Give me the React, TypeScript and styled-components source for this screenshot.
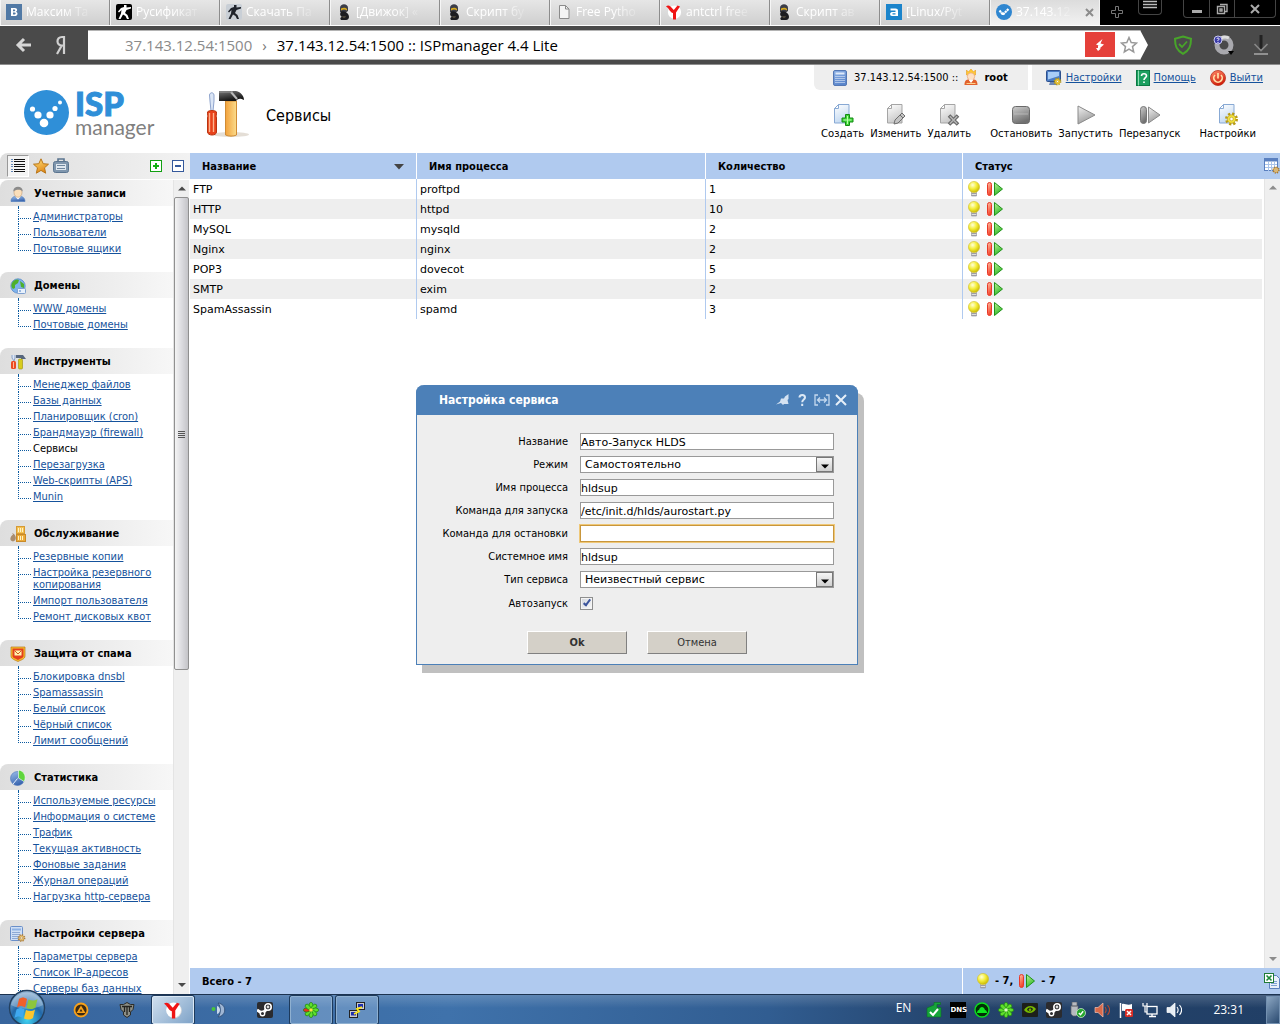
import React from 'react';
import styled, { createGlobalStyle, css } from 'styled-components';

const tahoma = `'DejaVu Sans Condensed', 'Open Sans', sans-serif`;
const verdana = `'DejaVu Sans', sans-serif`;
const segoe = `'Open Sans', 'Noto Sans', sans-serif`;

const Global = createGlobalStyle`
  *, *::before, *::after { box-sizing: border-box; }
  body { margin: 0; background: #fff; color: #000; font: 11px/14px ${tahoma}; }
  button { padding: 0; border: 0; background: none; color: inherit; font: inherit; cursor: pointer; }
  ul { list-style: none; margin: 0; padding: 0; }
  h1, h2 { margin: 0; }
  svg { display: block; flex: none; }
`;

/* ---------- drawings ---------- */

type SvgProps = { w?: number; h?: number; box?: string; children?: React.ReactNode };
const Svg = ({ w = 16, h = 16, box, children }: SvgProps) => (
  <svg width={w} height={h} viewBox={box || `0 0 ${w} ${h}`} aria-hidden="true">
    {children}
  </svg>
);

const HiddenSvg = styled.svg`
  position: absolute;
  width: 0;
  height: 0;
`;

const grads: [string, string, string, boolean?][] = [
  ['gDoc', '#ffffff', '#c3d9f1'],
  ['gDocGrey', '#ffffff', '#c9c9c9'],
  ['gGrey', '#cfcfcf', '#707070'],
  ['gGreyLight', '#f2f2f2', '#9c9c9c'],
  ['gGreen', '#c4f49a', '#2fb828'],
  ['gRed', '#ffc0a4', '#f4442c'],
  ['gBlue', '#9dc0ea', '#3a66b0'],
  ['gCalc', '#8fb2e4', '#5a86cc'],
  ['gWood', '#f2a23c', '#fbdc8c', true],
  ['gMetal', '#777777', '#111111'],
  ['gPower', '#ff8a6a', '#d2200c'],
  ['gGold', '#ffe27a', '#e28a1a'],
];

const Defs = () => (
  <HiddenSvg aria-hidden="true">
    <defs>
      {grads.map(([id, a, b, flat]) => (
        <linearGradient key={id} id={id} x1="0" y1="0" x2={flat ? '1' : '0.4'} y2={flat ? '0' : '1'}>
          <stop offset="0" stopColor={a} />
          <stop offset="1" stopColor={b} />
        </linearGradient>
      ))}
      <radialGradient id="gBulb" cx="0.38" cy="0.32" r="0.7">
        <stop offset="0" stopColor="#ffffd8" />
        <stop offset="0.5" stopColor="#f4ee3c" />
        <stop offset="1" stopColor="#c9b800" />
      </radialGradient>
      <radialGradient id="gOrb" cx="0.5" cy="0.85" r="0.9">
        <stop offset="0" stopColor="#3fd0f0" />
        <stop offset="0.5" stopColor="#2268a8" />
        <stop offset="1" stopColor="#a9c4dc" />
      </radialGradient>
    </defs>
  </HiddenSvg>
);

const VkIcon = () => (
  <Svg>
    <rect width="16" height="16" fill="#5179a5" />
    <path d="M5 4h4c2.500 0 2.800 3 1 3.700C12.400 8.500 11.800 12 9 12H5zM7 5.600v1.600h1.500c1 0 1-1.600 0-1.600zm0 3v1.900h1.800c1.200 0 1.200-1.900 0-1.900z" fill="#fff" fillRule="evenodd" />
  </Svg>
);

const SoldierIcon = ({ bg, fg }: { bg: string; fg: string }) => (
  <Svg>
    <rect width="16" height="16" rx="2" fill={bg} />
    <path d="M8 1h2.500v2.500L15 3v1.500L10.500 6 9 9l2.500 2L13 15h-2l-1.500-3L7 10.500 4.500 15h-2L5 9.500 5.500 6 3 8.500 2 7.500 5 4l3-1z" fill={fg} />
  </Svg>
);

const HelmetIcon = () => (
  <Svg>
    <path d="M4 4c0-5 8-5 8 0v3L9 9 4 8z" fill="#3b3d48" />
    <path d="M5 4.500c1.500-1 5-1 6 .5v1.500c-2-1.500-4-1.500-6 0z" fill="#d6a91e" />
    <path d="M5 7.500c4-1 8 2 8 5.500 0 1.500-1 3-3 3H5c-1.500-2 0-3 1-3-2-1-2.500-3-1-5.500z" fill="#1c1c20" />
    <path d="M6 12h4l-1 2H7z" fill="#474137" />
  </Svg>
);

const PageIcon = () => (
  <Svg>
    <path d="M3.500 1.500h6l3.500 3.500v9.500H3.500z" fill="#f4f4f4" stroke="#8b8b8b" />
    <path d="M9.500 1.500V5H13" fill="none" stroke="#8b8b8b" />
  </Svg>
);

const YIcon = ({ w = 16 }: { w?: number }) => (
  <Svg w={w} h={w} box="0 0 16 16">
    <circle cx="9" cy="8.500" r="6.800" fill="#dcdcdc" />
    <circle cx="8.500" cy="8" r="6.600" fill="#fff" />
    <path d="M0 2.500c1.500-1.500 3-1.200 4.500 0L7.800 6l3.700-4.500 2.500 1L10 8.500V15.500H7V9C4 8.500 3 4 0 2.500z" fill="#f01414" />
  </Svg>
);

const AIcon = () => (
  <Svg>
    <rect width="16" height="16" fill="#1b84cb" />
    <path d="M4.500 4.500h5c1.500 0 2.500.8 2.500 2.300V12H6C3.500 12 3.500 8 6 8h3.500V6.500h-5zM6.500 9.300v1.200h3V9.300z" fill="#fff" fillRule="evenodd" />
  </Svg>
);

const IspIcon = ({ w = 45 }: { w?: number }) => (
  <Svg w={w} h={w} box="0 0 45 45">
    <circle cx="22.500" cy="22.500" r="22.500" fill="#2f8fd8" />
    <g fill="#fff">
      <circle cx="8.500" cy="19" r="2.600" />
      <circle cx="14" cy="25" r="3.600" />
      <circle cx="20" cy="33" r="4.300" />
      <circle cx="26" cy="25" r="3.600" />
      <circle cx="31" cy="18.500" r="2.600" />
      <circle cx="36" cy="12.500" r="2" />
    </g>
  </Svg>
);

const IspTabIcon = () => (
  <Svg>
    <circle cx="8" cy="8" r="8" fill="#2f86d0" />
    <path d="M3.500 6.500l3.500 4 5.500-5.500" stroke="#fff" strokeWidth="2.200" strokeDasharray="2.200 .5" fill="none" />
  </Svg>
);

const BackIcon = () => (
  <Svg w={18} h={18}>
    <path d="M16 9H3M9 3L3 9l6 6" fill="none" stroke="#d6d6d6" strokeWidth="3" />
  </Svg>
);

const YaIcon = () => (
  <Svg w={12} h={20}>
    <path d="M9 19V2H7C1 2 1 10.500 7 10.500h2M6.500 11L2 19" fill="none" stroke="#d0d0d0" strokeWidth="2.200" />
  </Svg>
);

const BoltIcon = () => (
  <Svg w={10} h={12}>
    <path d="M7.500 0L1 5.500 5 7 3 6.500V9H1l2 3 3-2.500H4.500L9 5.500 5.500 4.500z" fill="#fff" />
  </Svg>
);

const StarOutline = () => (
  <Svg w={18} h={18}>
    <path d="M9 1.500l2.200 5 5.300.5-4 3.600 1.200 5.400L9 13.200 4.300 16l1.200-5.400-4-3.600 5.300-.5z" fill="#fff" stroke="#9a9a9a" strokeWidth="1.500" />
  </Svg>
);

const ShieldIcon = () => (
  <Svg w={20} h={20}>
    <path d="M10 1.500l8 2.300c0 7-1.500 11.500-8 15-6.500-3.500-8-8-8-15z" fill="none" stroke="#48a52a" strokeWidth="2" />
    <path d="M6 9l3 3 5-5.500" fill="none" stroke="#48a52a" strokeWidth="1.800" />
  </Svg>
);

const DiscIcon = () => (
  <Svg w={22} h={22}>
    <circle cx="12" cy="11" r="7" fill="none" stroke="#a9a9ae" strokeWidth="5" />
    <path d="M6 7a8 8 0 0 1 11-3" fill="none" stroke="#ddd" strokeWidth="3" />
    <circle cx="6" cy="6" r="4" fill="#3b3ba8" stroke="#c9c9ee" />
    <path d="M4.800 5c.4-1.500 2.600-1.200 2.300.2L6 6.300v.8M6 8v1" stroke="#fff" fill="none" />
    <path d="M16 17h6l-3 4z" fill="#000" />
  </Svg>
);

const DownloadIcon = () => (
  <Svg w={16} h={22}>
    <path d="M8 1v14" stroke="#222" strokeWidth="3" />
    <path d="M1.500 10L8 16.500 14.500 10" fill="none" stroke="#888" strokeWidth="1.600" />
    <path d="M1 20h14" stroke="#aaa" strokeWidth="1.500" />
  </Svg>
);

const BigToolsIcon = () => (
  <Svg w={46} h={48}>
    <ellipse cx="27" cy="44.500" rx="18" ry="2.500" fill="#d8d0c4" opacity=".7" />
    <path d="M5.500 5c.5-3 4-3 4.500 0v6l-1 10H7L6 11z" fill="#dbe6f6" stroke="#8ea3cc" />
    <path d="M3.500 22c1-2 8-2 9 0 0 3-.5 4 0 6v14c0 4-9 4-9 0V28c.5-2 0-3 0-6z" fill="#e8421a" stroke="#b8330f" />
    <path d="M5.500 23v19M9.500 23v19" stroke="#ffb38e" strokeWidth="1.400" />
    <path d="M21.500 11h11v34c-3 1.500-8 1.500-11 0z" fill="url(#gWood)" stroke="#d08c34" />
    <path d="M15 1h17c5 1 8 5 8 9-4-2-6-1.500-8 1H15z" fill="url(#gMetal)" />
    <path d="M27 2l6 7" stroke="#bbb" strokeWidth="2" />
    <path d="M15 2h14" stroke="#999" />
  </Svg>
);

const CalcIcon = () => (
  <Svg>
    <rect x="1.500" y=".5" width="13" height="15" rx="1.500" fill="url(#gCalc)" stroke="#5478b4" />
    <path d="M3.500 3.500h9" stroke="#dfeafa" strokeWidth="2" />
    <path d="M3.500 6.500h9M3.500 8.500h9M3.500 10.500h9M3.500 12.500h9" stroke="#f4f8ff" strokeDasharray="1 1" />
  </Svg>
);

const KingIcon = () => (
  <Svg w={14} h={17}>
    <path d="M2.500 1l2 2L7 0l2.500 3 2-2v5h-9z" fill="#ffc932" stroke="#e89a1c" strokeWidth=".6" />
    <circle cx="7" cy="7.500" r="3.700" fill="#fde0c4" stroke="#e8a06a" strokeWidth=".7" />
    <path d="M.5 16c0-4.500 2-5.500 4-5.500l2.500 3 2.500-3c2 0 4 1 4 5.500z" fill="#e2622c" />
    <path d="M4.500 10.500L7 14l2.500-3.500z" fill="#fff" />
    <path d="M2.500 14.500h9" stroke="#ffd08a" />
  </Svg>
);

const Gear = ({ x, y, r, c = '#e8cf2a', s = '#b89a14' }: { x: number; y: number; r: number; c?: string; s?: string }) => (
  <g>
    <circle cx={x} cy={y} r={r} fill="none" stroke={s} strokeWidth={r * 0.6} strokeDasharray={`${r * 0.42} ${r * 0.365}`} />
    <circle cx={x} cy={y} r={r * 0.85} fill={c} stroke={s} strokeWidth=".6" />
    <circle cx={x} cy={y} r={r * 0.35} fill="#fff" stroke={s} strokeWidth=".6" />
  </g>
);

const MonitorIcon = () => (
  <Svg>
    <rect x=".5" y=".5" width="14" height="11" rx="1" fill="#4a7cc4" stroke="#2c4f8c" />
    <path d="M2 2h11v4L2 9.500z" fill="#a8cdf6" />
    <path d="M4 12h6l1 3H3z" fill="#6d87b5" />
    <Gear x={11.500} y={11.500} r={3} c="#ffd23c" />
  </Svg>
);

const HelpIcon = () => (
  <Svg w={14} h={16}>
    <rect x=".5" y=".5" width="13" height="15" fill="#1da060" stroke="#0d7a44" />
    <path d="M2.500 .5v15" stroke="#8fe0b4" />
    <path d="M5.500 6c0-3 5-3 5 0 0 1.500-2.500 2-2.500 4M8 11.500V13" fill="none" stroke="#fff" strokeWidth="1.600" />
  </Svg>
);

const PowerIcon = () => (
  <Svg>
    <circle cx="8" cy="8" r="7.500" fill="url(#gPower)" stroke="#b8301a" strokeWidth=".8" />
    <path d="M5 5a4.200 4.200 0 1 0 6 0M8 3v5.500" fill="none" stroke="#ffe0a8" strokeWidth="1.700" />
  </Svg>
);

const Sheet = ({ grey }: { grey?: boolean }) => (
  <g>
    <path d="M6.500 .5h10.500v18.500H2.500V4.500z" fill={grey ? 'url(#gDocGrey)' : 'url(#gDoc)'} stroke={grey ? '#a5a5a5' : '#88a9d4'} />
    <path d="M6.500 .5v4H2.500z" fill="#fff" stroke={grey ? '#a5a5a5' : '#88a9d4'} />
  </g>
);

const CreateIcon = () => (
  <Svg w={22} h={22}>
    <Sheet />
    <path d="M13.500 10.500h4v3.500H21v4h-3.500v3.500h-4V18H10v-4h3.500z" fill="#3fd53a" stroke="#148a14" />
    <path d="M15.500 12v8M11.500 16h8" stroke="#b8ffa8" />
  </Svg>
);
const EditIcon = () => (
  <Svg w={22} h={22}>
    <Sheet grey />
    <path d="M17 9l3 3-7 7-4 1 1-4z" fill="#c4c4c4" stroke="#6e6e6e" />
    <path d="M15 11l3 3" stroke="#6e6e6e" />
  </Svg>
);
const DeleteIcon = () => (
  <Svg w={22} h={22}>
    <Sheet grey />
    <path d="M11 11.500l9 9M20 11.500l-9 9" stroke="#666" strokeWidth="3.600" />
    <path d="M11.800 12.300l7.400 7.400M19.200 12.300l-7.400 7.400" stroke="#b4b4b4" strokeWidth="1.600" />
  </Svg>
);
const StopIcon = () => (
  <Svg w={22} h={22}>
    <rect x="2.500" y="2.500" width="17" height="17" rx="3" fill="url(#gGrey)" stroke="#6a6a6a" />
    <path d="M4 10h14" stroke="#ccc" opacity=".6" />
  </Svg>
);
const StartIcon = () => (
  <Svg w={22} h={22}>
    <path d="M3 2l17 9L3 20z" fill="url(#gGreyLight)" stroke="#8a8a8a" strokeLinejoin="round" />
  </Svg>
);
const RestartGreyIcon = () => (
  <Svg w={22} h={22}>
    <rect x="1.500" y="2.500" width="6" height="17" rx="3" fill="url(#gGrey)" stroke="#777" />
    <path d="M9.500 3l11.500 8-11.500 8z" fill="url(#gGreyLight)" stroke="#8a8a8a" strokeLinejoin="round" />
  </Svg>
);
const SheetGearIcon = () => (
  <Svg w={22} h={22}>
    <Sheet />
    <Gear x={14.500} y={15} r={5} c="#f0e040" />
  </Svg>
);

const ListIcon = () => (
  <Svg>
    <path d="M4 1.500h11M4 3.500h11M4 6.500h11M4 8.500h11M4 11.500h11M4 13.500h11" stroke="#111" />
    <path d="M1 1.500h2M1 3.500h2M1 6.500h2M1 8.500h2M1 11.500h2M1 13.500h2" stroke="#6688b8" />
  </Svg>
);
const GoldStar = () => (
  <Svg>
    <path d="M8 .8l2.200 4.900 5.300.5-4 3.600 1.200 5.400L8 12.400l-4.700 2.800 1.200-5.400-4-3.600 5.300-.5z" fill="url(#gGold)" stroke="#b8761a" />
  </Svg>
);
const CaseIcon = () => (
  <Svg>
    <path d="M5 3V1h6v2" fill="none" stroke="#5b7590" strokeWidth="1.600" />
    <rect x=".5" y="3.500" width="15" height="11" rx="2" fill="#7f96ad" stroke="#5b7590" />
    <path d="M3 6h10v6H3z" fill="#dfe7ef" />
    <path d="M4 7.500h8M4 10.500h8" stroke="#6f879f" />
  </Svg>
);
const BoxSign = ({ plus }: { plus?: boolean }) => (
  <Svg w={12} h={12}>
    <rect x=".5" y=".5" width="11" height="11" fill="#fff" stroke={plus ? '#12a012' : '#35599c'} />
    <path d={plus ? 'M6 3v6M3 6h6' : 'M3 6h6'} stroke={plus ? '#12b012' : '#35599c'} strokeWidth="2" />
  </Svg>
);

const UserIcon = () => (
  <Svg>
    <path d="M1 15.500c0-4 3-5 4-5l3 2 3-2c1 0 4 1 4 5z" fill="url(#gBlue)" stroke="#4a78bb" strokeWidth=".6" />
    <path d="M5 10.500l3 3 3-3z" fill="#fff" />
    <ellipse cx="8" cy="6.500" rx="4" ry="4.800" fill="#fbdfba" stroke="#b78a5e" strokeWidth=".5" />
    <path d="M3.500 5.500C2 -1 14 -1 12.500 5.500 11.500 3.500 6 3 3.500 5.500z" fill="#8a8a8a" />
  </Svg>
);
const GlobeIcon = () => (
  <Svg>
    <circle cx="8" cy="8" r="7.200" fill="#7db2ec" stroke="#4b7fc4" strokeWidth=".7" />
    <path d="M2 5c2-4 6-4 7-3l-1 3-3 2v3l-2 1C1 9 1 7 2 5zM10 3l4 3v4l-3-1z" fill="#4fb02c" />
    <rect x="7.500" y="10.500" width="8" height="5" rx="1" fill="#e8f1fc" stroke="#7ea0cf" />
    <path d="M9 13h2" stroke="#4b7fc4" />
  </Svg>
);
const SmallToolsIcon = () => (
  <Svg>
    <path d="M2 1v3l2 3 1-3V1" stroke="#8aa2c8" fill="#dbe6f6" />
    <rect x="1" y="7" width="5" height="8" rx="1.500" fill="#ec4a22" />
    <path d="M3.500 8v6" stroke="#ffb89a" />
    <path d="M6 1h7l3 4h-5V4H6z" fill="#56667e" />
    <rect x="8.500" y="5" width="4" height="10" rx="1" fill="#d8cc1e" stroke="#9a8f0a" strokeWidth=".6" />
  </Svg>
);
const BoxesIcon = () => (
  <Svg>
    <rect x="6.500" y=".5" width="8" height="7" fill="#f4c154" stroke="#d69a34" />
    <rect x="6.500" y="8.500" width="9" height="7" fill="#ecab3a" stroke="#c98a28" />
    <path d="M8.500 2v4M10.500 2v4M12.500 2v4M8.500 10v4M10.500 10v4M12.500 10v4" stroke="#fff3c4" />
    <path d="M2 7l2 1c3 3 2 7-1 7.500-4-.5-3-5 0-7z" fill="#a98d70" />
  </Svg>
);
const SpamIcon = () => (
  <Svg>
    <path d="M1 1h14v9c0 3-4 4-7 5.500C5 14 1 13 1 10z" fill="#f7c02c" stroke="#b9761a" strokeWidth=".7" />
    <path d="M2.500 2.500h11V10c0 2-3 2.500-5.500 4-2.500-1.500-5.500-2-5.500-4z" fill="#e4401e" />
    <rect x="4.500" y="4.500" width="7" height="5" fill="#fff3b0" />
    <path d="M4.500 4.500L8 8l3.500-3.500" stroke="#d05a20" fill="none" />
  </Svg>
);
const PieIcon = () => (
  <Svg>
    <circle cx="7.500" cy="8.500" r="7" fill="url(#gBlue)" stroke="#4a74b8" strokeWidth=".6" />
    <path d="M8.500 0a7.500 7.500 0 0 1 5.500 11.500L8.500 8z" fill="#5fd53c" stroke="#fff" strokeWidth=".6" />
    <path d="M7.500 8.500L3 14" stroke="#e8f2ff" />
  </Svg>
);
const CalcGearIcon = () => (
  <Svg>
    <rect x=".5" y=".5" width="12" height="14" rx="1" fill="#cfdff5" stroke="#6a8fc9" />
    <path d="M2 3.500h9" stroke="#8fb2e4" strokeWidth="2" />
    <path d="M2.500 6.500h8M2.500 8.500h8M2.500 10.500h8M2.500 12.500h8" stroke="#4a72b4" strokeDasharray="1 1" />
    <Gear x={11.500} y={12} r={3} c="#f3cf7a" s="#b0803a" />
  </Svg>
);

const BulbIcon = () => (
  <Svg w={14} h={16}>
    <path d="M4.500 10h5v5h-5z" fill="#ddd" stroke="#9c9ca4" strokeWidth=".7" />
    <path d="M4.500 12.500h5M4.500 14.500h5" stroke="#9c9ca4" />
    <circle cx="7" cy="6" r="5.600" fill="url(#gBulb)" stroke="#d0c030" strokeWidth=".6" />
  </Svg>
);
const RestartIcon = () => (
  <Svg w={18} h={16}>
    <rect x="1.500" y="1.500" width="4" height="13" rx="2" fill="url(#gRed)" stroke="#e83828" />
    <path d="M8.500 1.500L16.500 8l-8 6.500z" fill="url(#gGreen)" stroke="#1f9418" strokeLinejoin="round" />
  </Svg>
);
const TableGearIcon = () => (
  <Svg>
    <rect x=".5" y=".5" width="13" height="12" fill="#fff" stroke="#5a80c0" />
    <path d="M0 2h14" stroke="#5a80c0" strokeWidth="3" />
    <path d="M1 6.500h12M1 9.500h12M4.500 4v9M7.500 4v9M10.500 4v9" stroke="#a9c4ea" />
    <Gear x={12} y={12} r={2.800} c="#f5d68a" s="#a8762a" />
  </Svg>
);
const ExcelIcon = () => (
  <Svg>
    <path d="M5.500 2.500h7l3 3v10h-10z" fill="#e8effa" stroke="#5a7fbd" />
    <path d="M7 8.500h6M7 10.500h6M7 12.500h6" stroke="#7fa0d4" />
    <rect x=".5" y=".5" width="9" height="9" fill="#fff" stroke="#1f7a36" />
    <path d="M2.500 2.500l5 5M7.500 2.500l-5 5" stroke="#1f8a3a" strokeWidth="1.600" />
  </Svg>
);
const Arrow = ({ down, faint }: { down?: boolean; faint?: boolean }) => (
  <Svg w={8} h={5}>
    <path d={down ? 'M0 0h8L4 4z' : 'M0 4.500h8l-4-4z'} fill={faint ? '#8c8c8c' : '#4a4a4a'} />
  </Svg>
);

const WinOrb = () => (
  <Svg w={38} h={38}>
    <circle cx="19" cy="19" r="17.500" fill="url(#gOrb)" stroke="#23405f" strokeWidth="1.500" />
    <path d="M3 16a16.500 16.500 0 0 1 32 0c-10 5-22 5-32 0z" fill="#fff" opacity=".28" />
    <path d="M11 10c3-2 5-2 8 0l-2 8.500c-3-2-5-2-8 0z" fill="#f0602a" />
    <path d="M20.500 10.500c3 1.500 6 1.500 9-.5L27.500 18.500c-3 2-6 2-9 .5z" fill="#8cc63e" />
    <path d="M8.500 20.500c3-2 5-2 8 0L14.500 29c-3-2-5-2-8 0z" fill="#3fa9f0" />
    <path d="M18 21c3 1.500 6 1.500 9-.5L25 29c-3 2-6 2-9 .5z" fill="#fcc62c" />
  </Svg>
);
const AimpIcon = () => (
  <Svg>
    <circle cx="8" cy="8" r="6.500" fill="#3a2a14" stroke="#f7a11a" strokeWidth="1.800" />
    <path d="M8 3.500l4.500 7.500h-9z" fill="#f7a11a" />
    <path d="M8 7l1.500 2.500h-3z" fill="#3a2a14" />
  </Svg>
);
const TankIcon = () => (
  <Svg>
    <path d="M8 .5l3.500 2H15l-1 5-2.500 2.500v3L8 15.500 4.500 13v-3L2 7.500l-1-5h3.500z" fill="#8d8f86" stroke="#2c2c28" />
    <path d="M3 4.500h10M5.500 4.500V10M10.500 4.500V10M8 4.500V13" stroke="#22221e" strokeWidth="1.300" />
  </Svg>
);
const TeamspeakIcon = () => (
  <Svg>
    <path d="M7 1c9 1 9 13 0 14 3-3 3-11 0-14z" fill="#9fb6d4" stroke="#35547c" />
    <path d="M6 4c4 1 4 7 0 8z" fill="#c9d8ea" />
    <circle cx="2.500" cy="7" r="2" fill="#49c43c" />
  </Svg>
);
const SteamIcon = () => (
  <Svg>
    <rect width="16" height="16" rx="2" fill="#2b2b2e" />
    <path d="M0 8l5.500 3.500L11 5.500" stroke="#fff" strokeWidth="3" fill="none" />
    <circle cx="11" cy="5" r="3.200" fill="#2b2b2e" stroke="#fff" strokeWidth="1.600" />
    <circle cx="11" cy="5" r="1.400" fill="#ddd" />
    <circle cx="5.500" cy="11.500" r="2.200" fill="#2b2b2e" stroke="#fff" strokeWidth="1.400" />
  </Svg>
);
const FlowerIcon = ({ red }: { red?: boolean }) => (
  <Svg>
    <g stroke="#1d7d12" strokeWidth=".7">
      {[0, 45, 90, 135, 180, 225, 270, 315].map((a) => (
        <ellipse key={a} cx="8" cy="3.600" rx="2" ry="3.200" transform={`rotate(${a} 8 8)`} fill={red && a === 270 ? '#e8321c' : '#5fe02c'} />
      ))}
    </g>
    <circle cx="8" cy="8" r="1.800" fill={red ? '#ffe23c' : '#d8ffb8'} />
  </Svg>
);
const PuttyIcon = () => (
  <Svg>
    <rect x="7.500" y=".5" width="8" height="7" fill="#ccc" stroke="#222" />
    <rect x="9" y="2" width="5" height="3.500" fill="#1d2fb0" />
    <rect x=".5" y="8.500" width="8" height="7" fill="#ccc" stroke="#222" />
    <rect x="2" y="10" width="5" height="3.500" fill="#1d2fb0" />
    <path d="M13 5L8 7l2 2.500L5 12" stroke="#ffe81c" strokeWidth="1.800" fill="none" />
  </Svg>
);
const GreenCheckTray = () => (
  <Svg>
    <path d="M1 6l7-3V.5h6.500v2H11v3h4V15H1z" fill="#16a43a" stroke="#0b7022" strokeWidth=".6" />
    <path d="M4 10l3 3 5-6" stroke="#fff" strokeWidth="2" fill="none" />
  </Svg>
);
const CloudTray = () => (
  <Svg>
    <circle cx="8" cy="8" r="7" fill="#032d06" stroke="#0be01b" strokeWidth="1.400" />
    <path d="M3 11c0-2 1-3 2-3 1-4 5-4 6 0 1 0 2 1 2 3z" fill="#0fe820" />
  </Svg>
);
const NvidiaTray = () => (
  <Svg>
    <rect y="1" width="16" height="14" rx="1" fill="#1d1f1a" />
    <path d="M2 8c3-5 9-5 12-1-3 5-9 5-12 1zm3 0c2 2 5 2 6-1-2-2-5-2-6 1z" fill="#76b900" fillRule="evenodd" />
    <circle cx="8" cy="7.700" r="1.300" fill="#76b900" />
  </Svg>
);
const UsbTray = () => (
  <Svg>
    <path d="M2 0h5v4H2zM1 4h7v8l-2 2H3l-2-2z" fill="#b7bac0" stroke="#60636a" strokeWidth=".7" />
    <circle cx="11" cy="11" r="4.500" fill="#25a52c" stroke="#dff4dd" strokeWidth=".7" />
    <path d="M8.800 11l1.700 1.700 2.700-3.400" stroke="#fff" strokeWidth="1.400" fill="none" />
  </Svg>
);
const SpeakerTray = ({ red }: { red?: boolean }) => (
  <Svg>
    <path d="M1 5.500h3l5-4.500v14l-5-4.500H1z" fill={red ? '#d8694a' : '#e8eef4'} stroke={red ? '#f4c3b4' : '#fff'} strokeWidth=".7" />
    <path d="M11 5c1.500 2 1.500 4 0 6M13.500 3c2.500 3 2.500 7 0 10" stroke={red ? '#b34a32' : '#fff'} fill="none" strokeWidth="1.100" />
  </Svg>
);
const FlagTray = () => (
  <Svg>
    <path d="M2.500 1v15" stroke="#fff" strokeWidth="1.500" />
    <path d="M4 2c3-1 5 2 10 0v7c-5 2-7-1-10 0z" fill="#fff" />
    <rect x="7" y="7" width="8" height="8" rx="1.500" fill="#d92c23" />
    <path d="M9 9l4 4M13 9l-4 4" stroke="#fff" strokeWidth="1.500" />
  </Svg>
);
const NetTray = () => (
  <Svg>
    <rect x="5" y="4.500" width="10" height="7.500" fill="#24456d" stroke="#fff" strokeWidth="1.300" />
    <path d="M7 14.500h7M10 12v2" stroke="#fff" strokeWidth="1.400" />
    <path d="M1 1v3h4V1M3 4v6h2" stroke="#fff" fill="none" strokeWidth="1.200" />
  </Svg>
);

/* ---------- browser chrome ---------- */

const Screen = styled.div`
  display: flex;
  flex-direction: column;
  height: 100vh;
  overflow: hidden;
`;

const TabStrip = styled.div`
  display: flex;
  flex: none;
  height: 26px;
  background: #000;
  border-bottom: 1px solid #fff;
`;

const Tab = styled.button<{ $active?: boolean }>`
  display: flex;
  align-items: center;
  gap: 4px;
  flex: 0 1 110px;
  min-width: 0;
  padding: 0 5px 1px;
  background: ${(p) => (p.$active ? 'linear-gradient(#dcdcdc, #f2f2f2)' : 'linear-gradient(#e6e6e6, #cfcfcf)')};
  border-right: 1px solid ${(p) => (p.$active ? '#f2f2f2' : '#8c8c8c')};
  border-left: 1px solid #f6f6f6;
  color: #fff;
  font: 12px/16px ${segoe};
`;

const TabTitle = styled.span`
  white-space: nowrap;
  text-align: left;
  mask-image: linear-gradient(90deg, #000 60%, rgba(0, 0, 0, 0.2));
`;

const TabClose = styled.span`
  margin-left: auto;
`;

const StripButtons = styled.div`
  display: flex;
  flex: 1;
  align-items: flex-start;
  padding: 0 4px 0 10px;
`;

const NewTab = styled.button`
  margin-top: 5px;
`;

const MenuButton = styled.button`
  display: flex;
  justify-content: center;
  width: 24px;
  height: 15px;
  margin-left: 14px;
  border: 1px solid #444;
  border-top: 0;
  border-radius: 0 0 4px 4px;
`;

const WindowButtons = styled.div`
  display: flex;
  height: 18px;
  margin-left: auto;
  border: 1px solid #444;
  border-top: 0;
  border-radius: 0 0 4px 4px;
`;

const WindowButton = styled.button<{ $wide?: boolean }>`
  display: flex;
  align-items: center;
  justify-content: center;
  width: ${(p) => (p.$wide ? 41 : 25)}px;
  &:not(:first-child) { border-left: 1px solid #444; }
`;

const AddressBar = styled.div`
  display: flex;
  flex: none;
  align-items: center;
  height: 39px;
  padding: 0 11px 0 14px;
  background: #4a4a4a;
  border-bottom: 1px solid #8e8e8e;
`;

const NavButton = styled.button`
  display: flex;
  justify-content: center;
  width: 20px;
  margin-right: 18px;
  & + & { width: 18px; }
`;

const Omnibox = styled.div`
  display: flex;
  flex: 1;
  align-items: stretch;
  height: 30px;
  margin-right: 25px;
  padding: 1px 0 2px 37px;
  background: #fff;
  border: solid #b4b4b4;
  border-width: 1px 0;
  clip-path: polygon(0 0, calc(100% - 8px) 0, 100% 50%, calc(100% - 8px) 100%, 0 100%);
  font: 15px/26px ${segoe};
  white-space: nowrap;
`;

const Host = styled.span`
  color: #8a8a8a;
`;
const Chevron = styled.span`
  margin: 0 10px;
  color: #777;
`;
const PageTitle = styled.span`
  flex: 1;
`;
const FlashButton = styled.button`
  display: flex;
  align-items: center;
  justify-content: center;
  width: 30px;
  background: #e5403a;
`;
const StarButton = styled.button`
  display: flex;
  align-items: center;
  width: 33px;
  padding-left: 5px;
`;
const Extensions = styled.div`
  display: flex;
  align-items: center;
  gap: 19px;
`;

/* ---------- panel header ---------- */

const Header = styled.header`
  display: flex;
  flex: none;
  height: 88px;
  align-items: flex-start;
`;

const Logo = styled.a`
  display: flex;
  gap: 6px;
  padding: 25px 0 0 24px;
  width: 204px;
  text-decoration: none;
  font-family: Lato, sans-serif;
`;
const LogoText = styled.span`
  display: flex;
  flex-direction: column;
`;
const LogoIsp = styled.span`
  color: #2f8fd8;
  font-size: 33px;
  font-weight: 900;
  line-height: 27px;
  -webkit-text-stroke: 1px #2f8fd8;
`;
const LogoManager = styled.span`
  color: #808080;
  font-size: 21px;
  line-height: 20px;
`;

const Heading = styled.h1`
  display: flex;
  align-items: center;
  gap: 16px;
  padding-top: 25px;
  font: 16px/20px ${tahoma};
`;

const HeadingText = styled.span`
  padding-top: 3px;
`;

const HeaderRight = styled.div`
  display: flex;
  flex-direction: column;
  align-items: flex-end;
  margin-left: auto;
`;

const InfoRow = styled.div`
  display: flex;
  gap: 4px;
`;

const InfoBox = styled.div<{ $rounded?: boolean; $gap: number }>`
  display: flex;
  align-items: center;
  gap: ${(p) => p.$gap}px;
  height: 25px;
  padding: ${(p) => (p.$rounded ? '0 20px 0 18px' : '0 17px 0 14px')};
  background: #eee;
  border-bottom-left-radius: ${(p) => (p.$rounded ? 6 : 0)}px;
`;

const InfoLink = styled.a`
  display: flex;
  align-items: center;
  gap: 4px;
  color: #15529c;
`;

const IconBox = styled.span`
  display: flex;
`;

const Toolbar = styled.div`
  display: flex;
  gap: 6px;
  padding: 14px 24px 0 0;
`;

const Tool = styled.button<{ $apart?: boolean }>`
  display: flex;
  flex-direction: column;
  align-items: center;
  gap: 1px;
  margin-left: ${(p) => (p.$apart ? 13 : 0)}px;
  font: 10px/14px ${verdana};
`;

/* ---------- sidebar ---------- */

const Body = styled.div`
  display: flex;
  flex: 1;
  min-height: 0;
`;

const Sidebar = styled.nav`
  display: flex;
  flex-direction: column;
  flex: none;
  width: 190px;
`;

const SideTools = styled.div`
  display: flex;
  align-items: center;
  gap: 4px;
  flex: none;
  height: 26px;
  margin-bottom: 1px;
  padding: 0 6px 0 7px;
  background: linear-gradient(90deg, #dedede, #f2f2f2);
  border-top-left-radius: 8px;
`;

const SideToolPair = styled.div`
  display: flex;
  gap: 10px;
  margin-left: auto;
`;

const SideTool = styled.button<{ $pressed?: boolean }>`
  display: flex;
  ${(p) =>
    p.$pressed &&
    css`
      padding: 2px;
      border: 1px solid;
      border-color: #999 #fff #fff #999;
      background: #f4f4f4;
    `}
`;

const SideBody = styled.div`
  display: flex;
  flex: 1;
  min-height: 0;
`;

const Sections = styled.div`
  flex: 1;
  overflow: hidden;
`;

const SectionTitle = styled.h2`
  display: flex;
  align-items: center;
  gap: 8px;
  height: 26px;
  padding: 2px 0 0 10px;
  background: linear-gradient(90deg, #dedede, #f7f7f7);
  border-top-left-radius: 8px;
  font: bold 11px/14px ${tahoma};
`;

const Items = styled.ul`
  margin-bottom: 16px;
  &::before {
    content: '';
    display: block;
    height: 2px;
    margin-left: 18px;
    border-left: 1px dotted #0a5aa0;
  }
`;

const Item = styled.li`
  display: flex;
  gap: 2px;
  padding-left: 18px;
`;

const Branch = styled.span`
  display: flex;
  flex-direction: column;
  flex: none;
  width: 13px;
  &::before {
    content: '';
    height: 11px;
    border: dotted #0a5aa0;
    border-width: 0 0 1px 1px;
  }
  &::after {
    content: '';
    flex: 1;
    border-left: 1px dotted #0a5aa0;
  }
  ${Item}:last-child &::after { border: 0; }
`;

const ItemLabel = styled.span`
  max-width: 126px;
  padding: 3px 0 1px;
  line-height: 12px;
`;

const SideLink = styled.a`
  color: #15529c;
`;

const Scroll = styled.div<{ $side?: boolean }>`
  display: flex;
  flex-direction: column;
  align-items: center;
  justify-content: space-between;
  flex: ${(p) => (p.$side ? '0 0 16px' : '1')};
  margin: ${(p) => (p.$side ? '0 1px 0 0' : '0 0 0 2px')};
  padding: 6px 0;
  background: #efefef;
  border-left: 1px solid #e4e4e4;
`;

const Thumb = styled.div`
  display: flex;
  flex: 0 1 59%;
  align-items: center;
  justify-content: center;
  width: 15px;
  margin: 6px 0 auto;
  border: 1px solid #909090;
  border-radius: 2px;
  background: linear-gradient(90deg, #f4f4f4, #dcdce0 50%, #c4c4c8);
`;

/* ---------- services table ---------- */

const Main = styled.main`
  position: relative;
  display: grid;
  grid-template-columns: minmax(0, 1fr) 18px;
  grid-template-rows: minmax(0, 1fr) 26px;
  flex: 1;
  min-width: 0;
`;

const Table = styled.table`
  width: 100%;
  table-layout: fixed;
  border-collapse: separate;
  border-spacing: 0;
  font: 11px/14px ${verdana};
`;

const Col = styled.col<{ $w?: number }>`
  width: ${(p) => (p.$w ? `${p.$w}px` : 'auto')};
`;

const Th = styled.th`
  height: 26px;
  padding: 2px 12px 0;
  background: #b0caef;
  border-right: 1px solid #fff;
  text-align: left;
  font-family: ${tahoma};
  &:last-child { border-right: 0; }
`;

const ThInner = styled.span`
  display: flex;
  align-items: center;
  justify-content: space-between;
`;

const Row = styled.tr`
  &:nth-child(even) { background: #eee; }
`;

const Td = styled.td`
  height: 20px;
  padding: 2px 3px 0;
  border-right: 1px solid #b0caef;
  &:last-child { padding-top: 0; border-right: 0; }
`;

const Status = styled.span`
  display: flex;
  gap: 5px;
  padding-left: 1px;
`;

const Side = styled.div`
  display: flex;
  flex-direction: column;
`;

const Corner = styled.button`
  display: flex;
  flex: none;
  align-items: center;
  justify-content: flex-end;
  height: 26px;
  background: #b0caef;
`;

const Footer = styled.div`
  display: flex;
  grid-column: 1 / -1;
  align-items: center;
  background: #b0caef;
  font-weight: bold;
`;

const Total = styled.span`
  flex: 0 0 773px;
  align-self: stretch;
  padding: 1px 0 0 12px;
  border-right: 1px solid #fff;
  line-height: 25px;
`;

const Counts = styled.span`
  display: flex;
  flex: 1;
  align-items: center;
  gap: 5px;
  padding-left: 13px;
`;

/* ---------- dialog ---------- */

const Dialog = styled.form`
  position: absolute;
  top: 232px;
  left: 226px;
  width: 442px;
  padding-bottom: 10px;
  background: #eee;
  border: 1px solid #4c80b8;
  border-top: 0;
  border-radius: 8px 8px 0 0;
  box-shadow: 6px 8px 0 #c0c0c0;
`;

const DialogTitle = styled.div`
  display: flex;
  align-items: center;
  gap: 5px;
  height: 30px;
  margin: 0 -1px 18px;
  padding: 0 11px 0 23px;
  background: #4c80b8;
  border-radius: 8px 8px 0 0;
  color: #fff;
`;

const DialogHeading = styled.h2`
  flex: 1;
  font: bold 12px/16px ${tahoma};
`;

const Fields = styled.div`
  display: grid;
  grid-template-columns: 151px 254px;
  column-gap: 12px;
  row-gap: 6px;
  align-items: center;
`;

const Label = styled.label`
  padding-top: 1px;
  text-align: right;
  line-height: 16px;
  white-space: nowrap;
`;

const control = css`
  width: 100%;
  height: 17px;
  border: 1px solid #999;
  border-radius: 0;
  background: #fff;
  color: #000;
  font: 11px/14px ${verdana};
  outline: 0;
`;

const TextBox = styled.input<{ $lit?: boolean }>`
  ${control}
  padding: 1px 0 0;
  ${(p) =>
    p.$lit &&
    css`
      border-color: #c8963c;
      box-shadow: 0 0 0 1px #efc878;
    `}
`;

const SelectWrap = styled.span`
  display: grid;
  grid-template-columns: 1fr 17px 1px;
  align-items: center;
`;

const Select = styled.select`
  ${control}
  grid-area: 1 / 1 / 2 / -1;
  padding: 1px 4px 0;
  appearance: none;
`;

const SelectArrow = styled.span`
  display: flex;
  grid-area: 1 / 2;
  align-items: center;
  justify-content: center;
  height: 15px;
  padding-top: 3px;
  border: 1px solid #777;
  background: linear-gradient(#f6f6f6, #cfcfcf);
  pointer-events: none;
  z-index: 1;
`;

const Check = styled.input`
  appearance: none;
  display: flex;
  width: 13px;
  height: 13px;
  margin: 3px 0;
  border: 1px solid #8e8f8f;
  background: linear-gradient(135deg, #d2d6dc, #fafafa);
  box-shadow: inset 0 0 0 1px #f4f4f4;
  &:checked::after {
    content: '';
    width: 4px;
    height: 8px;
    margin: 0 0 0 4px;
    border: solid #3c559c;
    border-width: 0 2px 2px 0;
    transform: rotate(38deg);
  }
`;

const Buttons = styled.div`
  display: flex;
  justify-content: center;
  gap: 20px;
  margin-top: 18px;
`;

const PushButton = styled.button<{ $strong?: boolean }>`
  width: 100px;
  height: 23px;
  padding-top: 1px;
  background: #d4d0c8;
  border: 1px solid;
  border-color: #fff #808080 #808080 #fff;
  color: #333;
  font-weight: ${(p) => (p.$strong ? 'bold' : 'normal')};
`;

/* ---------- taskbar ---------- */

const Taskbar = styled.footer`
  display: flex;
  flex: none;
  align-items: center;
  height: 30px;
  background: linear-gradient(rgba(255, 255, 255, 0.18), rgba(255, 255, 255, 0) 45%),
    linear-gradient(90deg, #38659d, #3f72ab 35%, #315d91 60%, #24436b 75%, #213f66);
  border-top: 1px solid #1c3350;
  color: #fff;
  font: 12px/16px ${segoe};
`;

const StartButton = styled.button`
  width: 38px;
  height: 38px;
  margin: -4px 14px 0 8px;
  z-index: 1;
`;

const TaskButton = styled.button<{ $state?: 'open' | 'active' }>`
  display: flex;
  align-items: center;
  justify-content: center;
  width: 42px;
  height: 28px;
  margin-right: 4px;
  border: 1px solid transparent;
  border-radius: 2px;
  ${(p) =>
    p.$state &&
    css`
      border-color: ${p.$state === 'active' ? '#dbe8f4' : '#8fb0d0'};
      background: ${p.$state === 'active' ? 'linear-gradient(135deg, #cfdfee, #7fa3c8)' : 'rgba(200, 225, 250, 0.28)'};
      box-shadow: 0 0 0 1px #1d3a5c;
    `}
`;

const Tray = styled.div`
  display: flex;
  align-items: center;
  gap: 8px;
  margin-left: auto;
`;

const Lang = styled.span`
  margin-right: 7px;
  padding-bottom: 4px;
`;
const Dns = styled.span`
  width: 16px;
  background: #000;
  font: bold 7px/16px ${verdana};
  text-align: center;
`;
const Clock = styled.span`
  margin: 0 22px 0 23px;
`;
const ShowDesktop = styled.button`
  align-self: stretch;
  width: 14px;
  margin-top: 1px;
  border: 1px solid #7390b0;
  background: linear-gradient(135deg, #8ba6c2, #2a4a70);
`;

/* ---------- data ---------- */

const tabs: [React.ReactNode, string][] = [
  [<VkIcon />, 'Максим Та'],
  [<SoldierIcon bg="#000" fg="#fff" />, 'Русификат'],
  [<SoldierIcon bg="#c9cfd6" fg="#20242c" />, 'Скачать Па'],
  [<HelmetIcon />, '[Движок] «'],
  [<HelmetIcon />, 'Скрипт бу'],
  [<PageIcon />, 'Free Pytho'],
  [<YIcon />, 'antctrl free'],
  [<HelmetIcon />, 'Скрипт ав'],
  [<AIcon />, '[Linux/Pyt'],
];

const tools: [React.ReactNode, string, boolean?][] = [
  [<CreateIcon />, 'Создать'],
  [<EditIcon />, 'Изменить'],
  [<DeleteIcon />, 'Удалить'],
  [<StopIcon />, 'Остановить', true],
  [<StartIcon />, 'Запустить'],
  [<RestartGreyIcon />, 'Перезапуск'],
  [<SheetGearIcon />, 'Настройки', true],
];

const sections: { icon: React.ReactNode; title: string; items: string[] }[] = [
  { icon: <UserIcon />, title: 'Учетные записи', items: ['Администраторы', 'Пользователи', 'Почтовые ящики'] },
  { icon: <GlobeIcon />, title: 'Домены', items: ['WWW домены', 'Почтовые домены'] },
  {
    icon: <SmallToolsIcon />,
    title: 'Инструменты',
    items: ['Менеджер файлов', 'Базы данных', 'Планировщик (cron)', 'Брандмауэр (firewall)', 'Сервисы', 'Перезагрузка', 'Web-скрипты (APS)', 'Munin'],
  },
  { icon: <BoxesIcon />, title: 'Обслуживание', items: ['Резервные копии', 'Настройка резервного копирования', 'Импорт пользователя', 'Ремонт дисковых квот'] },
  { icon: <SpamIcon />, title: 'Защита от спама', items: ['Блокировка dnsbl', 'Spamassassin', 'Белый список', 'Чёрный список', 'Лимит сообщений'] },
  {
    icon: <PieIcon />,
    title: 'Статистика',
    items: ['Используемые ресурсы', 'Информация о системе', 'Трафик', 'Текущая активность', 'Фоновые задания', 'Журнал операций', 'Нагрузка http-сервера'],
  },
  { icon: <CalcGearIcon />, title: 'Настройки сервера', items: ['Параметры сервера', 'Список IP-адресов', 'Серверы баз данных'] },
];

const services = [
  ['FTP', 'proftpd', 1],
  ['HTTP', 'httpd', 10],
  ['MySQL', 'mysqld', 2],
  ['Nginx', 'nginx', 2],
  ['POP3', 'dovecot', 5],
  ['SMTP', 'exim', 2],
  ['SpamAssassin', 'spamd', 3],
];

type Field = { id: string; label: string; value: string; select?: boolean; lit?: boolean };
const fields: Field[] = [
  { id: 'name', label: 'Название', value: 'Авто-Запуск HLDS' },
  { id: 'mode', label: 'Режим', value: 'Самостоятельно', select: true },
  { id: 'process', label: 'Имя процесса', value: 'hldsup' },
  { id: 'start', label: 'Команда для запуска', value: '/etc/init.d/hlds/aurostart.py' },
  { id: 'stop', label: 'Команда для остановки', value: '', lit: true },
  { id: 'system', label: 'Системное имя', value: 'hldsup' },
  { id: 'type', label: 'Тип сервиса', value: 'Неизвестный сервис', select: true },
];

const tasks: [React.ReactNode, string, ('open' | 'active')?][] = [
  [<AimpIcon />, 'AIMP'],
  [<TankIcon />, 'World of Tanks'],
  [<YIcon w={18} />, 'Yandex', 'active'],
  [<TeamspeakIcon />, 'TeamSpeak'],
  [<SteamIcon />, 'Steam'],
  [<FlowerIcon red />, 'ICQ', 'open'],
  [<PuttyIcon />, 'PuTTY', 'open'],
];

/* ---------- page ---------- */

const Browser = () => (
  <>
    <TabStrip>
      {tabs.map(([icon, title]) => (
        <Tab key={title}>
          {icon}
          <TabTitle>{title}</TabTitle>
        </Tab>
      ))}
      <Tab $active>
        <IspTabIcon />
        <TabTitle>37.143.12</TabTitle>
        <TabClose>
          <Svg w={9} h={9}>
            <path d="M1 1l7 7M8 1L1 8" stroke="#8c8c8c" strokeWidth="2" />
          </Svg>
        </TabClose>
      </Tab>
      <StripButtons>
        <NewTab aria-label="Новая вкладка">
          <Svg w={14} h={14}>
            <path d="M5.500 1.500h3v4h4v3h-4v4h-3v-4h-4v-3h4z" fill="none" stroke="#777" />
          </Svg>
        </NewTab>
        <MenuButton aria-label="Меню">
          <Svg w={16} h={10}>
            <path d="M1 1.500h14M1 4.500h14M1 7.500h14" stroke="#bbb" strokeWidth="1.600" />
          </Svg>
        </MenuButton>
        <WindowButtons>
          <WindowButton aria-label="Свернуть">
            <Svg w={12} h={12}>
              <path d="M1 8.500h10" stroke="#aaa" strokeWidth="3" />
            </Svg>
          </WindowButton>
          <WindowButton aria-label="Развернуть">
            <Svg w={12} h={12}>
              <path d="M1.500 3.500h7v7h-7zM4 1.500h7v7H9M4 6h2v2H4z" fill="none" stroke="#aaa" strokeWidth="1.400" />
            </Svg>
          </WindowButton>
          <WindowButton $wide aria-label="Закрыть">
            <Svg w={10} h={10}>
              <path d="M1 1l8 8M9 1L1 9" stroke="#aaa" strokeWidth="2" />
            </Svg>
          </WindowButton>
        </WindowButtons>
      </StripButtons>
    </TabStrip>
    <AddressBar>
      <NavButton aria-label="Назад"><BackIcon /></NavButton>
      <NavButton aria-label="Яндекс"><YaIcon /></NavButton>
      <Omnibox>
        <Host>37.143.12.54:1500</Host>
        <Chevron>›</Chevron>
        <PageTitle>37.143.12.54:1500 :: ISPmanager 4.4 Lite</PageTitle>
        <FlashButton aria-label="Турбо"><BoltIcon /></FlashButton>
        <StarButton aria-label="В закладки"><StarOutline /></StarButton>
      </Omnibox>
      <Extensions>
        <ShieldIcon />
        <DiscIcon />
        <DownloadIcon />
      </Extensions>
    </AddressBar>
  </>
);

const PanelHeader = () => (
  <Header>
    <Logo href="#">
      <IspIcon />
      <LogoText>
        <LogoIsp>ISP</LogoIsp>
        <LogoManager>manager</LogoManager>
      </LogoText>
    </Logo>
    <Heading>
      <BigToolsIcon />
      <HeadingText>Сервисы</HeadingText>
    </Heading>
    <HeaderRight>
      <InfoRow>
        <InfoBox $rounded $gap={6}>
          <CalcIcon />
          <span>37.143.12.54:1500 ::</span>
          <KingIcon />
          <b>root</b>
        </InfoBox>
        <InfoBox $gap={14}>
          <InfoLink href="#"><MonitorIcon />Настройки</InfoLink>
          <InfoLink href="#"><HelpIcon />Помощь</InfoLink>
          <InfoLink href="#"><PowerIcon />Выйти</InfoLink>
        </InfoBox>
      </InfoRow>
      <Toolbar>
        {tools.map(([icon, label, apart]) => (
          <Tool key={label} $apart={apart}>
            {icon}
            {label}
          </Tool>
        ))}
      </Toolbar>
    </HeaderRight>
  </Header>
);

const SideMenu = () => (
  <Sidebar>
    <SideTools>
      <SideTool $pressed aria-label="Меню"><ListIcon /></SideTool>
      <SideTool aria-label="Избранное"><GoldStar /></SideTool>
      <SideTool aria-label="Задачи"><CaseIcon /></SideTool>
      <SideToolPair>
        <SideTool aria-label="Развернуть все"><BoxSign plus /></SideTool>
        <SideTool aria-label="Свернуть все"><BoxSign /></SideTool>
      </SideToolPair>
    </SideTools>
    <SideBody>
      <Sections>
        {sections.map((s) => (
          <section key={s.title}>
            <SectionTitle>{s.icon}{s.title}</SectionTitle>
            <Items>
              {s.items.map((item) => (
                <Item key={item}>
                  <Branch />
                  <ItemLabel>{item === 'Сервисы' ? item : <SideLink href="#">{item}</SideLink>}</ItemLabel>
                </Item>
              ))}
            </Items>
          </section>
        ))}
      </Sections>
      <Scroll $side>
        <Arrow />
        <Thumb>
          <Svg w={8} h={8}>
            <path d="M0 1.500h7M0 3.500h7M0 5.500h7M0 7.500h7" stroke="#555" />
          </Svg>
        </Thumb>
        <Arrow down />
      </Scroll>
    </SideBody>
  </Sidebar>
);

const ServiceDialog = () => (
  <Dialog onSubmit={(e) => e.preventDefault()}>
    <DialogTitle>
      <DialogHeading>Настройка сервиса</DialogHeading>
      <button type="button" aria-label="Закрепить">
        <Svg w={14} h={14}>
          <path d="M12.500 1v5l-1 1 1 4H8l-1 1-2-2-5 1.500 4-3 1-3h3l1-2z" fill="#d4e2f2" />
        </Svg>
      </button>
      <button type="button" aria-label="Справка">
        <Svg w={14} h={14}>
          <path d="M4.500 4.500c0-3.500 5.500-3.500 5.500 0C10 6.500 7.200 6.500 7.200 9.200M7.200 10.700v2.300" fill="none" stroke="#dce8f5" strokeWidth="2" />
        </Svg>
      </button>
      <button type="button" aria-label="Ширина">
        <Svg w={16} h={14}>
          <path d="M4 2H1v10h3M12 2h3v10h-3M3.500 7h9M6 4.500L3.500 7 6 9.500M10 4.500L12.500 7 10 9.500" fill="none" stroke="#c4d8ee" strokeWidth="1.300" />
        </Svg>
      </button>
      <button type="button" aria-label="Закрыть">
        <Svg w={12} h={12}>
          <path d="M1 1l10 10M11 1L1 11" stroke="#e6eff8" strokeWidth="2" />
        </Svg>
      </button>
    </DialogTitle>
    <Fields>
      {fields.map((f) => (
        <React.Fragment key={f.id}>
          <Label htmlFor={f.id}>{f.label}</Label>
          {f.select ? (
            <SelectWrap>
              <Select id={f.id} defaultValue={f.value}>
                <option>{f.value}</option>
              </Select>
              <SelectArrow>
                <Svg w={8} h={5}><path d="M0 .5h8L4 4.500z" fill="#000" /></Svg>
              </SelectArrow>
            </SelectWrap>
          ) : (
            <TextBox id={f.id} type="text" defaultValue={f.value} $lit={f.lit} />
          )}
        </React.Fragment>
      ))}
      <Label htmlFor="auto">Автозапуск</Label>
      <Check id="auto" type="checkbox" defaultChecked />
    </Fields>
    <Buttons>
      <PushButton type="submit" $strong>Ok</PushButton>
      <PushButton type="button">Отмена</PushButton>
    </Buttons>
  </Dialog>
);

const Services = () => (
  <Main>
    <div>
      <Table>
        <colgroup>
          <Col $w={227} />
          <Col $w={289} />
          <Col $w={257} />
          <Col />
        </colgroup>
        <thead>
          <tr>
            <Th>
              <ThInner>
                Название
                <Svg w={10} h={6}><path d="M0 0h10L5 5.500z" fill="#444" /></Svg>
              </ThInner>
            </Th>
            <Th>Имя процесса</Th>
            <Th>Количество</Th>
            <Th>Статус</Th>
          </tr>
        </thead>
        <tbody>
          {services.map(([name, process, count]) => (
            <Row key={name}>
              <Td>{name}</Td>
              <Td>{process}</Td>
              <Td>{count}</Td>
              <Td>
                <Status><BulbIcon /><RestartIcon /></Status>
              </Td>
            </Row>
          ))}
        </tbody>
      </Table>
    </div>
    <Side>
      <Corner aria-label="Настройка таблицы"><TableGearIcon /></Corner>
      <Scroll>
        <Arrow faint />
        <Arrow down faint />
      </Scroll>
    </Side>
    <Footer>
      <Total>Всего - 7</Total>
      <Counts>
        <BulbIcon /> - 7, <RestartIcon /> - 7
      </Counts>
      <IconBox><ExcelIcon /></IconBox>
    </Footer>
    <ServiceDialog />
  </Main>
);

const DesktopBar = () => (
  <Taskbar>
    <StartButton aria-label="Пуск"><WinOrb /></StartButton>
    {tasks.map(([icon, name, state]) => (
      <TaskButton key={name} aria-label={name} $state={state}>{icon}</TaskButton>
    ))}
    <Tray>
      <Lang>EN</Lang>
      <GreenCheckTray />
      <Dns>DNS</Dns>
      <CloudTray />
      <FlowerIcon />
      <NvidiaTray />
      <SteamIcon />
      <UsbTray />
      <SpeakerTray red />
      <FlagTray />
      <NetTray />
      <SpeakerTray />
      <Clock>23:31</Clock>
    </Tray>
    <ShowDesktop aria-label="Свернуть все окна" />
  </Taskbar>
);

export default function App() {
  return (
    <Screen>
      <Global />
      <Defs />
      <Browser />
      <PanelHeader />
      <Body>
        <SideMenu />
        <Services />
      </Body>
      <DesktopBar />
    </Screen>
  );
}
